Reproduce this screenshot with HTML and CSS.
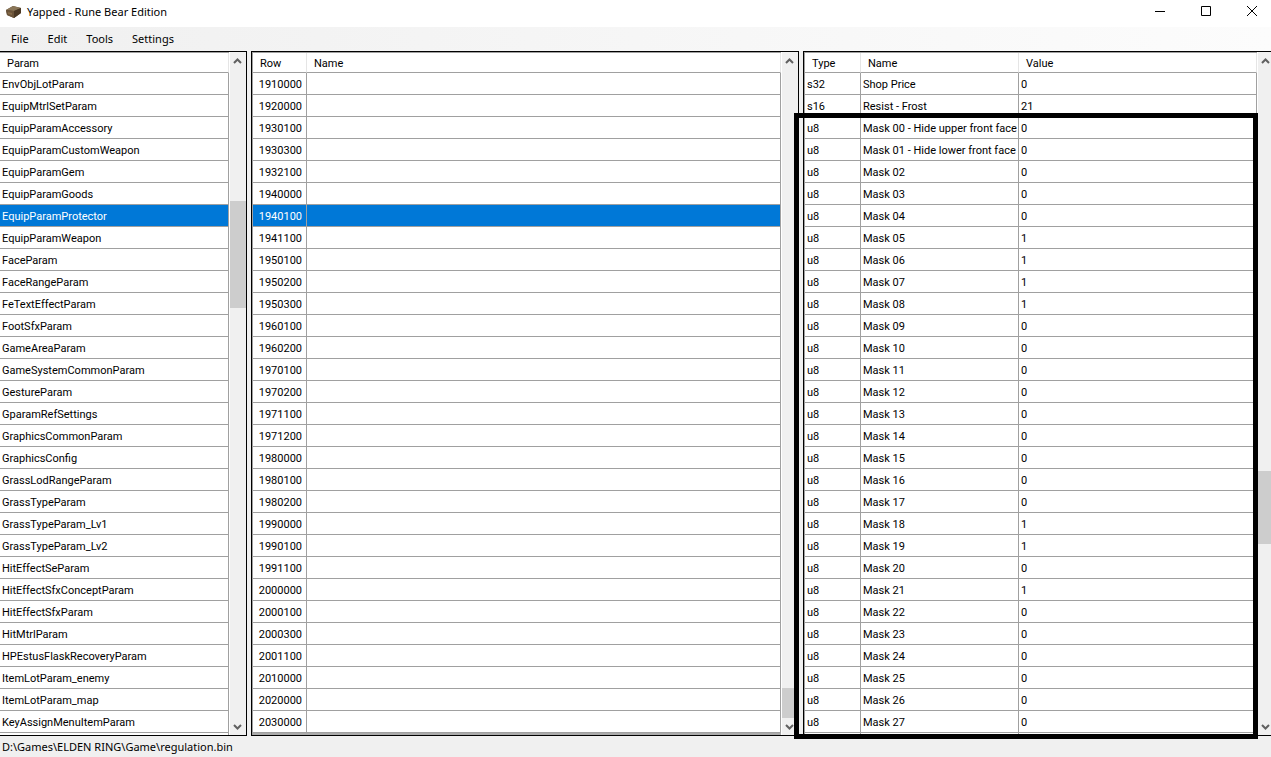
FILE: index.html
```html
<!DOCTYPE html>
<html lang="en">
    <head>
        <meta charset="UTF-8">
        <meta name="viewport" content="width=device-width, initial-scale=1.0">
        <title>Yapped - Rune Bear Edition</title>
        <link rel="stylesheet" href="styles.css">
    </head>
    <body>
        <header class="titlebar">
            <svg class="app_icon" width="16" height="14" viewBox="0 0 16 14">
                <path d="M0 5 L7 1 L15 3 L15 8 L8 13 L1 10 Z" fill="#57452f"/>
                <path d="M0 5 L7 1 L15 3 L8 6 Z" fill="#8a7658"/>
                <path d="M8 6 L15 3 L15 8 L8 13 Z" fill="#4a3824"/>
                <path d="M0 5 L8 6 L8 13 L1 10 Z" fill="#6b543a"/>
                <path d="M2 7 L6 8 L6 10 L2 9 Z" fill="#856a48"/>
            </svg>
            <h1>Yapped - Rune Bear Edition</h1>
            <div class="window_buttons">
                <button type="button" aria-label="Minimize">
                    <svg width="12" height="12" viewBox="0 0 12 12"><path d="M1 5.5 H11" stroke="#000"/></svg>
                </button>
                <button type="button" aria-label="Maximize">
                    <svg width="12" height="12" viewBox="0 0 12 12"><path d="M1.5 0.5 H10.5 V9.5 H1.5 Z" stroke="#000" fill="none"/></svg>
                </button>
                <button type="button" aria-label="Close">
                    <svg width="12" height="12" viewBox="0 0 12 12"><path d="M1 0 L11 10 M11 0 L1 10" stroke="#000"/></svg>
                </button>
            </div>
        </header>

        <nav class="menu">
            <button type="button">File</button>
            <button type="button">Edit</button>
            <button type="button">Tools</button>
            <button type="button">Settings</button>
        </nav>

        <main>
            <section class="pane params">
                <div class="grid_area">
                    <table>
                        <thead><tr><th>Param</th></tr></thead>
                        <tbody id="param_rows"></tbody>
                    </table>
                </div>
                <div class="scrollbar">
                    <button type="button" aria-label="Scroll up"><svg width="9" height="6" viewBox="0 0 9 6"><path d="M1 5 L4.5 1.5 L8 5"/></svg></button>
                    <div class="thumb"></div>
                    <button type="button" aria-label="Scroll down"><svg width="9" height="6" viewBox="0 0 9 6"><path d="M1 1 L4.5 4.5 L8 1"/></svg></button>
                </div>
            </section>

            <section class="pane rows">
                <div class="grid_area">
                    <table>
                        <thead><tr><th class="id">Row</th><th>Name</th></tr></thead>
                        <tbody id="row_rows"></tbody>
                    </table>
                </div>
                <div class="scrollbar">
                    <button type="button" aria-label="Scroll up"><svg width="9" height="6" viewBox="0 0 9 6"><path d="M1 5 L4.5 1.5 L8 5"/></svg></button>
                    <div class="thumb"></div>
                    <button type="button" aria-label="Scroll down"><svg width="9" height="6" viewBox="0 0 9 6"><path d="M1 1 L4.5 4.5 L8 1"/></svg></button>
                </div>
            </section>

            <section class="pane cells">
                <div class="grid_area">
                    <table>
                        <thead><tr><th class="type">Type</th><th class="name">Name</th><th>Value</th></tr></thead>
                        <tbody id="cell_rows"></tbody>
                    </table>
                </div>
                <div class="scrollbar">
                    <button type="button" aria-label="Scroll up"><svg width="9" height="6" viewBox="0 0 9 6"><path d="M1 5 L4.5 1.5 L8 5"/></svg></button>
                    <div class="thumb"></div>
                    <button type="button" aria-label="Scroll down"><svg width="9" height="6" viewBox="0 0 9 6"><path d="M1 1 L4.5 4.5 L8 1"/></svg></button>
                </div>
                <div class="marker"></div>
            </section>
        </main>

        <footer>D:\Games\ELDEN RING\Game\regulation.bin</footer>

        <script>
            var params = [
                "EnvObjLotParam", "EquipMtrlSetParam", "EquipParamAccessory", "EquipParamCustomWeapon",
                "EquipParamGem", "EquipParamGoods", "EquipParamProtector", "EquipParamWeapon",
                "FaceParam", "FaceRangeParam", "FeTextEffectParam", "FootSfxParam", "GameAreaParam",
                "GameSystemCommonParam", "GestureParam", "GparamRefSettings", "GraphicsCommonParam",
                "GraphicsConfig", "GrassLodRangeParam", "GrassTypeParam", "GrassTypeParam_Lv1",
                "GrassTypeParam_Lv2", "HitEffectSeParam", "HitEffectSfxConceptParam", "HitEffectSfxParam",
                "HitMtrlParam", "HPEstusFlaskRecoveryParam", "ItemLotParam_enemy", "ItemLotParam_map",
                "KeyAssignMenuItemParam", ""
            ];
            var rows = [
                1910000, 1920000, 1930100, 1930300, 1932100, 1940000, 1940100, 1941100, 1950100, 1950200,
                1950300, 1960100, 1960200, 1970100, 1970200, 1971100, 1971200, 1980000, 1980100, 1980200,
                1990000, 1990100, 1991100, 2000000, 2000100, 2000300, 2001100, 2010000, 2020000, 2030000
            ];
            var cells = [["s32", "Shop Price", 0], ["s16", "Resist - Frost", 21]];
            var mask_names = { 0: " - Hide upper front face", 1: " - Hide lower front face" };
            var masks_on = [5, 6, 7, 8, 18, 19, 21];

            for (var i = 0; i < 28; i++) {
                var number = String(i).padStart(2, "0");
                cells.push(["u8", "Mask " + number + (mask_names[i] || ""), masks_on.includes(i) ? 1 : 0]);
            }
            cells.push(["", "", ""]);

            function fillTable(id, data, selected) {
                var body = document.getElementById(id);
                data.forEach((values, index) => {
                    var row = body.insertRow();
                    if (index == selected) {
                        row.className = "selected";
                    }
                    values.forEach(value => {
                        row.insertCell().textContent = value;
                    });
                });
            }

            fillTable("param_rows", params.map(name => [name]), 6);
            fillTable("row_rows", rows.map(id => [id, ""]), 6);
            fillTable("cell_rows", cells, -1);
        </script>
    </body>
</html>
```
FILE: styles.css
```css
* {
    box-sizing: border-box;
    margin: 0;
    padding: 0;
}
body {
    display: flex;
    flex-direction: column;
    height: 100vh;
    overflow: hidden;
    background-color: #f0f0f0;
    color: black;
    font-family: "Noto Sans", "Open Sans", sans-serif;
    font-size: 11px;
}
button {
    border: none;
    background: none;
    color: inherit;
    font: inherit;
}

/* Title bar and menu */
.titlebar {
    display: flex;
    flex: none;
    align-items: center;
    height: 27px;
    padding: 0 0 4px 6px;
    overflow: hidden;
    background-color: white;
}
.titlebar h1 {
    margin-left: 5px;
    font-size: 11px;
    font-weight: normal;
}
.window_buttons {
    display: flex;
    margin: 0 -4px 0 auto;
}
.window_buttons button {
    display: flex;
    align-items: center;
    justify-content: center;
    width: 46px;
    height: 24px;
}
.menu {
    display: flex;
    flex: none;
    gap: 19px;
    height: 24px;
    padding: 0 11px 2px;
    background: linear-gradient(to right, #f0f0f0, #fcfcfc);
}

/* Panes */
main {
    display: grid;
    flex: 1;
    grid-template-columns: 247fr 548fr 468fr;
    gap: 4px;
    min-height: 0;
}
.pane {
    position: relative;
    display: flex;
    min-width: 0;
    min-height: 0;
    border: 1px solid black;
}
.params {
    border-left: none;
}
.cells {
    border-right: none;
}
.grid_area {
    flex: 1;
    overflow: hidden;
    border-top: 1px solid #a0a0a0;
    border-left: 1px solid #a0a0a0;
    background-color: white;
}
.params .grid_area {
    border-left: none;
}
.rows .grid_area {
    background-color: #ababab;
}
table {
    width: 100%;
    table-layout: fixed;
    border-collapse: separate;
    border-spacing: 0;
    background-color: white;
    font-family: Roboto, "Liberation Sans", sans-serif;
    font-size: 11px;
}
th {
    height: 20px;
    padding: 2px 0 0 7px;
    border-right: 1px solid #e5e5e5;
    border-bottom: 1px solid #a0a0a0;
    font-weight: normal;
    text-align: left;
}
td {
    height: 22px;
    padding: 2px 0 0 2px;
    border-right: 1px solid #a0a0a0;
    border-bottom: 1px solid #a0a0a0;
    white-space: nowrap;
}
.id {
    width: 54px;
}
.rows td:first-child {
    padding: 2px 4px 0 0;
    text-align: right;
}
.type {
    width: 56px;
}
.name {
    width: 158px;
}
.selected td {
    background-color: #0078d7;
    color: white;
}

/* Scrollbars */
.scrollbar {
    display: grid;
    flex: none;
    width: 17px;
    overflow: hidden;
    border-left: 1px solid white;
    background-color: #f0f0f0;
}
.scrollbar button {
    display: flex;
    align-items: center;
    justify-content: center;
    width: 15px;
    height: 17px;
}
.scrollbar button:last-child {
    grid-row: 5;
}
.scrollbar path {
    fill: none;
    stroke: #606060;
    stroke-width: 2;
}
.thumb {
    grid-row: 3;
    background-color: #cdcdcd;
}
.params .scrollbar {
    grid-template-rows: 17px 132fr 107fr 410fr 17px;
}
.rows .scrollbar {
    grid-template-rows: 17px 619fr 30fr 0fr 17px;
}
.cells .scrollbar {
    grid-template-rows: 17px 402fr 73fr 174fr 17px;
    width: 14px;
}

/* Box drawn round the mask fields */
.marker {
    position: absolute;
    top: 61px;
    right: 13px;
    bottom: -4px;
    left: -10px;
    border: 5px solid black;
    pointer-events: none;
}

footer {
    flex: none;
    height: 21px;
    padding: 3px 2px;
}
```
